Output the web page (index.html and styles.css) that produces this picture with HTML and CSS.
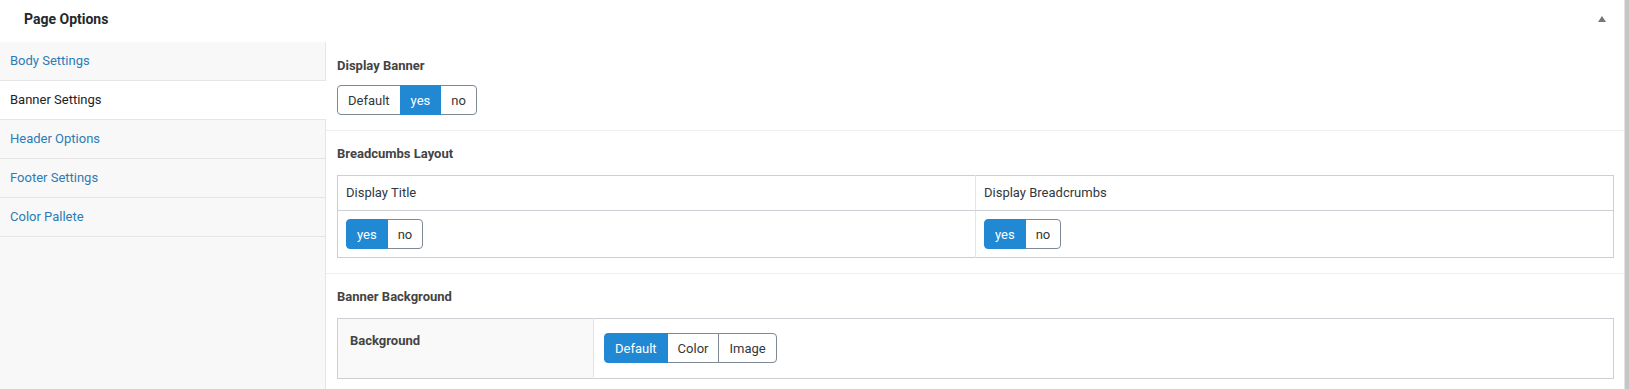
FILE: index.html
```html
<!DOCTYPE html>
<html lang="en">
<head>
<meta charset="UTF-8" />
<meta name="viewport" content="width=device-width, initial-scale=1" />
<title>Page Options</title>
<link rel="stylesheet" href="styles.css">
</head>
<body>

<div class="page">
  <div class="postbox">
    <div class="postbox-header">
      <h2>Page Options</h2>
      <span class="toggle-arrow"></span>
    </div>

    <div class="postbox-inside">
      <ul class="tabs">
        <li><a href="#">Body Settings</a></li>
        <li class="active"><a href="#">Banner Settings</a></li>
        <li><a href="#">Header Options</a></li>
        <li><a href="#">Footer Settings</a></li>
        <li><a href="#">Color Pallete</a></li>
      </ul>

      <div class="tab-content">
        <div class="field">
          <div class="field-title">Display Banner</div>
          <div class="btn-group">
            <button>Default</button>
            <button class="on">yes</button>
            <button>no</button>
          </div>
        </div>

        <div class="field">
          <div class="field-title">Breadcumbs Layout</div>
          <table class="field-table">
            <tr>
              <th>Display Title</th>
              <th>Display Breadcrumbs</th>
            </tr>
            <tr>
              <td>
                <div class="btn-group">
                  <button class="on">yes</button>
                  <button>no</button>
                </div>
              </td>
              <td>
                <div class="btn-group">
                  <button class="on">yes</button>
                  <button>no</button>
                </div>
              </td>
            </tr>
          </table>
        </div>

        <div class="field">
          <div class="field-title">Banner Background</div>
          <table class="field-table bg-table">
            <colgroup>
              <col class="bg-label-col">
              <col>
            </colgroup>
            <tr>
              <td class="bg-label">Background</td>
              <td class="bg-value">
                <div class="btn-group">
                  <button class="on">Default</button>
                  <button>Color</button>
                  <button>Image</button>
                </div>
              </td>
            </tr>
          </table>
        </div>
      </div>
    </div>
  </div>
  <div class="scrollbar"></div>
</div>

</body>
</html>
```

FILE: styles.css
```css
body {
  margin: 0;
  font-family: Roboto, "Liberation Sans", sans-serif;
  font-size: 13px;
  color: #32373c;
  background: #fff;
}
.page {
  display: flex;
  height: 389px;
  overflow: hidden;
}
.postbox {
  flex: 1;
  min-width: 0;
}
.scrollbar {
  width: 4px;
  background: #c6c6c6;
  border-left: 1px solid #e2e2e2;
}

/* header */
.postbox-header {
  display: flex;
  justify-content: space-between;
  align-items: center;
  height: 42px;
  padding: 0 18px 0 24px;
  box-sizing: border-box;
}
.postbox-header h2 {
  margin: 0;
  font-size: 14px;
  font-weight: 700;
  line-height: 18px;
  color: #23282d;
  padding-bottom: 4px;
}
.toggle-arrow {
  width: 0;
  height: 0;
  border-left: 4px solid transparent;
  border-right: 4px solid transparent;
  border-bottom: 6px solid #72777c;
  margin-bottom: 4px;
}

/* body */
.postbox-inside {
  display: flex;
  align-items: stretch;
  min-height: 347px;
}
.tabs {
  list-style: none;
  margin: 0;
  padding: 0;
  width: 325px;
  flex-shrink: 0;
  background: #f8f8f8;
  border-right: 1px solid #e5e5e5;
}
.tabs li {
  border-bottom: 1px solid #e5e5e5;
}
.tabs a {
  display: block;
  height: 38px;
  line-height: 38px;
  padding-left: 10px;
  color: #2b7cb6;
  text-decoration: none;
}
.tabs li.active {
  background: #fff;
  margin-right: -1px;
}
.tabs li.active a {
  color: #1d2327;
}

.tab-content {
  flex: 1;
  min-width: 0;
}
.field {
  padding: 14px 10px 15px 11px;
  border-bottom: 1px solid #eeeeee;
}
.field:first-child {
  padding-top: 15px;
}
.field:last-child {
  border-bottom: none;
}
.field-title {
  font-weight: 700;
  line-height: 18px;
  color: #444;
  margin-bottom: 12px;
}
.field:first-child .field-title {
  margin-bottom: 10px;
}

/* toggle buttons */
.btn-group {
  display: inline-flex;
}
.btn-group button {
  font-family: inherit;
  font-size: 13px;
  height: 30px;
  padding: 0 10px;
  margin: 0 0 0 -1px;
  border: 1px solid #7e8993;
  background: #fff;
  color: #32373c;
  cursor: pointer;
}
.btn-group button:first-child {
  margin-left: 0;
  border-radius: 4px 0 0 4px;
}
.btn-group button:last-child {
  border-radius: 0 4px 4px 0;
}
.btn-group button.on {
  background: #2188d3;
  border-color: #2188d3;
  color: #fff;
  position: relative;
  z-index: 1;
}

/* tables */
.field-table {
  width: 100%;
  table-layout: fixed;
  border-collapse: collapse;
  border: 1px solid #ccd0d4;
}
.field-table th {
  text-align: left;
  font-weight: 400;
  line-height: 18px;
  padding: 8px;
  border-bottom: 1px solid #ccd0d4;
  border-left: 1px solid #e5e5e5;
  color: #32373c;
}
.field-table td {
  padding: 8px;
  border-left: 1px solid #e5e5e5;
  vertical-align: top;
  line-height: 0;
}
.field-table th:first-child,
.field-table td:first-child {
  border-left: none;
}
.bg-label-col {
  width: 256px;
}
.bg-table .bg-label {
  background: #f9f9f9;
  font-weight: 700;
  color: #444;
  line-height: 18px;
  padding: 13px 12px 26px;
}
.bg-table .bg-value {
  padding: 14px 10px 15px;
}
```
